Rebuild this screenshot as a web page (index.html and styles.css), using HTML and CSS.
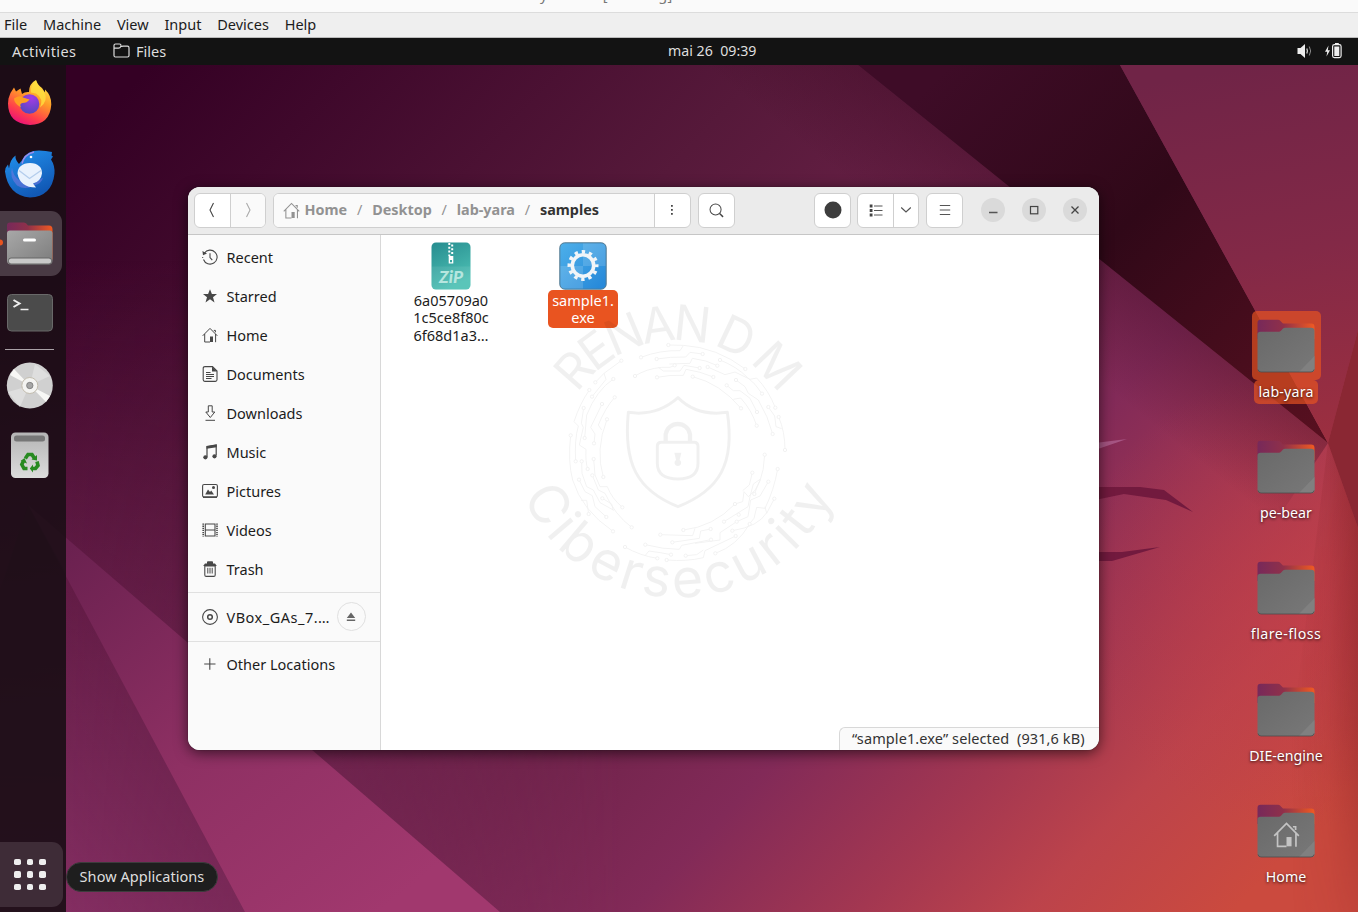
FILE: index.html
```html
<!DOCTYPE html>
<html lang="en">
<head>
<meta charset="utf-8">
<title>Files</title>
<link rel="stylesheet" href="styles.css">
</head>
<body>
<svg width="0" height="0" class="defs">
  <defs>
    <linearGradient id="tab" x1="0" x2="1"><stop offset="0" stop-color="#77295a"/><stop offset=".45" stop-color="#8f304a"/><stop offset="1" stop-color="#f05a22"/></linearGradient>
    <linearGradient id="grey" x1="0" y1="0" x2="1" y2="1"><stop offset="0" stop-color="#696969"/><stop offset="1" stop-color="#787878"/></linearGradient>
    <symbol id="folder" viewBox="0 0 58 54">
      <path d="M.5 50V4Q.5 .8 3.500 .8H21Q22.500 .8 23.500 2L26 4.600H54Q57.500 4.600 57.500 8V20H.5Z" fill="url(#tab)"/>
      <path d="M.5 15.500Q.5 12.700 3.500 12.700H22Q23 12.700 24 11.700L26 9.600Q27 8.700 28 8.700H54Q57.500 8.700 57.500 12V49.500Q57.500 53 54 53H4Q.5 53 .5 49.500Z" fill="url(#grey)"/>
      <path d="M57.500 37V49.500Q57.500 53 54 53H42Z" fill="#808080"/>
      <path d="M1 50.500Q1.500 53 4 53H54Q56.500 53 57 50.500" fill="none" stroke="#4d4d4d" stroke-width=".8"/>
    </symbol>
    <symbol id="home" viewBox="0 0 16 16">
      <path d="M.7 8.800L8 1.400L15.300 8.800M2.700 7V15H8M13.600 7V15.200M11.800 3.400H13.400V5.300" fill="none" stroke="currentColor" stroke-width="1"/><path d="M8 9.500H11V15H8Z" fill="currentColor"/>
    </symbol>
  </defs>
</svg>

<header class="host-title"><span>y</span><span>[Running]</span></header>
<nav class="host-menu"><span>File</span><span>Machine</span><span>View</span><span>Input</span><span>Devices</span><span>Help</span></nav>

<main class="guest">
  <div class="topbar">
    <span class="activities">Activities</span>
    <svg class="tb-folder" width="18" height="16" viewBox="0 0 18 16"><path d="M1 12.500V2.500Q1 1 2.500 1H6.500Q8 1 8 2.500T9.500 3.200H14.500Q16 3.200 16 4.700V12.500Q16 14 14.500 14H2.500Q1 14 1 12.500ZM1 5.200H5.500Q7 5.200 8 3.200" fill="none" stroke="#ddd" stroke-width="1.200"/></svg>
    <span>Files</span>
    <span class="clock">mai 26&nbsp; 09:39</span>
    <svg class="tray" width="50" height="18" viewBox="0 0 50 18"><path d="M1.500 6H4.500L9 2V16L4.500 12H1.500Z" fill="#eee"/><path d="M10.800 6.500Q12 9 10.800 11.500" fill="none" stroke="#ddd" stroke-width="1.200"/><path d="M13.300 4.500Q16 9 13.300 13.500" fill="none" stroke="#888" stroke-width="1"/><path d="M32.500 3.500L29 9.800H31.200L30.500 14.500L34 8.300H31.800Z" fill="#eee"/><rect x="36.600" y="2.600" width="8.500" height="13" rx="1.800" fill="none" stroke="#eee" stroke-width="1.200"/><rect x="38.300" y="4.500" width="5" height="9.500" fill="#eee"/><rect x="39" y="1" width="3.800" height="2" fill="#eee"/></svg>
  </div>

  <div class="desktop">
    <svg class="wallpaper" viewBox="0 65 1358 847" preserveAspectRatio="none">
      <defs>
        <linearGradient id="base" gradientUnits="userSpaceOnUse" x1="150" y1="65" x2="1150" y2="1000"><stop offset="0" stop-color="#340024"/><stop offset=".33" stop-color="#56193a"/><stop offset=".55" stop-color="#6f234a"/><stop offset=".68" stop-color="#822a58"/><stop offset=".8" stop-color="#a33751"/><stop offset=".89" stop-color="#bc434b"/><stop offset="1" stop-color="#cb4a3e"/></linearGradient>
        <linearGradient id="leftlow" gradientUnits="userSpaceOnUse" x1="60" y1="260" x2="60" y2="912"><stop offset="0" stop-color="#711f50" stop-opacity="0"/><stop offset="1" stop-color="#842e62"/></linearGradient>
        <linearGradient id="fade" gradientUnits="userSpaceOnUse" x1="66" y1="0" x2="620" y2="0"><stop offset="0" stop-color="#fff"/><stop offset="1" stop-color="#000"/></linearGradient>
        <mask id="leftmask"><rect x="0" y="65" width="1358" height="847" fill="url(#fade)"/></mask>
        <linearGradient id="dark" gradientUnits="userSpaceOnUse" x1="950" y1="65" x2="1320" y2="440"><stop offset="0" stop-color="#3e0c27"/><stop offset=".45" stop-color="#300818"/><stop offset="1" stop-color="#581020"/></linearGradient>
        <linearGradient id="rt" gradientUnits="userSpaceOnUse" x1="1250" y1="65" x2="1320" y2="440"><stop offset="0" stop-color="#702447"/><stop offset=".5" stop-color="#832947"/><stop offset="1" stop-color="#9c2f40"/></linearGradient>
        <linearGradient id="mag" gradientUnits="userSpaceOnUse" x1="80" y1="540" x2="380" y2="912"><stop offset="0" stop-color="#6b2150"/><stop offset=".5" stop-color="#8e3063"/><stop offset="1" stop-color="#a1386e"/></linearGradient>
        <linearGradient id="shade" gradientUnits="userSpaceOnUse" x1="1292" y1="0" x2="1362" y2="0"><stop offset="0" stop-color="#7c1c20" stop-opacity="0"/><stop offset=".5" stop-color="#7c1c20" stop-opacity=".15"/><stop offset="1" stop-color="#7c1c20" stop-opacity=".6"/></linearGradient>
        <linearGradient id="shadefade" x1="0" y1="0" x2="0" y2="1"><stop offset="0" stop-color="#fff"/><stop offset=".6" stop-color="#aaa"/><stop offset="1" stop-color="#333"/></linearGradient>
        <mask id="shademask"><rect x="1260" y="440" width="100" height="480" fill="url(#shadefade)"/></mask>
        <linearGradient id="ridge" gradientUnits="userSpaceOnUse" x1="1090" y1="252" x2="1030" y2="327"><stop offset="0" stop-color="#3c0a22" stop-opacity=".35"/><stop offset="1" stop-color="#3c0a22" stop-opacity="0"/></linearGradient>
        <radialGradient id="pink" gradientUnits="userSpaceOnUse" cx="1300" cy="600" r="230"><stop offset="0" stop-color="#c23d48" stop-opacity=".6"/><stop offset="1" stop-color="#c23d48" stop-opacity="0"/></radialGradient>
      </defs>
      <rect y="65" width="1358" height="847" fill="url(#base)"/>
      <rect y="65" width="1358" height="847" fill="url(#leftlow)" mask="url(#leftmask)"/>
      <rect y="65" width="1358" height="847" fill="url(#pink)"/>
      <path d="M858 65L1328 443L1260 545L690 100V65Z" fill="url(#ridge)"/>
      <path d="M858 65H1120L1328 443Z" fill="url(#dark)"/>
      <path d="M1120 65H1358V330L1328 443Z" fill="url(#rt)"/>
      <path d="M1358 330L1328 443L1358 528Z" fill="#8a2733"/>
      <path d="M1328 443L1358 528V912H1270Z" fill="url(#shade)" mask="url(#shademask)"/>
      <path d="M28 505L500 912H245Z" fill="url(#mag)"/>
      <path d="M28 505L66 573V912H0V590Z" fill="#3b1c32" opacity=".35"/>
      <path d="M1095 443L1127 439L1095 450Z" fill="#a65583"/>
      <path d="M1095 487H1140L1164 490L1193 512L1166 500L1124 494L1095 500Z" fill="#721a3e"/>
      <path d="M1095 552H1122L1160 547L1112 561H1095Z" fill="#721a3e"/>
    </svg>

    <aside class="dock">
      <div class="tile"><svg width="66" height="65" viewBox="0 71.500 66 65">
        <defs><linearGradient id="fx" x1=".8" y1="0" x2=".3" y2="1"><stop offset="0" stop-color="#fff14a"/><stop offset=".4" stop-color="#ff9b28"/><stop offset=".75" stop-color="#ff3f4b"/><stop offset="1" stop-color="#e9107a"/></linearGradient><radialGradient id="fp" cx=".6" cy=".2" r=".9"><stop offset="0" stop-color="#a43be6"/><stop offset="1" stop-color="#4b49b8"/></radialGradient></defs>
        <path d="M8.500 99Q10 93 14 88L16 92L20.500 89L22 94.500Q25 92 29 92.500Q29 84 36 80.500Q38 86 42 88.500L45 93V90Q51.500 96 51.300 105Q50 125 30 125.500Q8 124 8 104Z" fill="url(#fx)"/>
        <circle cx="29.500" cy="104.500" r="9.800" fill="url(#fp)"/>
        <path d="M14 99Q20 95 23 98L29.500 100Q27 103.500 22.500 103.500Q19 104 21 108Q14 104 14 99Z" fill="#ff9e22"/>
        <path d="M36 94Q44 99 40 108Q49 101 44 92Q38 88 36 81Q30 86 31 93Z" fill="#ffe03e" opacity=".8"/>
      </svg></div>
      <div class="tile"><svg width="66" height="65" viewBox="0 141.500 66 65">
        <defs><linearGradient id="tb" x1="0" y1="0" x2=".5" y2="1"><stop offset="0" stop-color="#2394ef"/><stop offset="1" stop-color="#1158b5"/></linearGradient></defs>
        <path d="M5 172Q5 168 8 165L9 169Q10 160 15.500 156Q15 160 19 164.500Q21 162 22.500 160Q27 151 39 151Q46 151 52 152.500L51.500 156L53 157L51 160Q55 166 54.500 174Q52 197 30 198Q8 196 5 172Z" fill="url(#tb)"/>
        <path d="M22 164Q24 155 34 152.500" fill="none" stroke="#9d8bea" stroke-width="1.500"/>
        <path d="M12 168Q9 178 17 186Q25 191 34 186Q42 184 43 178L34 184Q14 184 12 168Z" fill="#6f78e0" opacity=".6"/>
        <path d="M30 163.500Q42 164 42 174Q41 182 33 184L36 188Q20 188 17.500 174Q18 164 30 163.500Z" fill="#e9f2fd"/>
        <path d="M19 171L29.500 179L41 171" fill="none" stroke="#b4cdec" stroke-width="1.400"/>
        <circle cx="31" cy="157.500" r="1.300" fill="#fff"/>
      </svg></div>
      <div class="tile active"><svg width="66" height="65" viewBox="0 211.500 66 65">
        <defs><linearGradient id="fm" x1="0" y1="0" x2="1" y2="1"><stop offset="0" stop-color="#a8a8a8"/><stop offset="1" stop-color="#7c7c7c"/></linearGradient></defs>
        <circle cx="0" cy="243" r="3" fill="#e95420"/>
        <path d="M7 260V226Q7 223 10 223H24Q26 223 28 226H49Q52.500 226 52.500 230V260Z" fill="url(#tab)"/>
        <path d="M7 234Q7 231 10 231H49.500Q52.500 231 52.500 234V261Q52.500 265 49 265H11Q7 265 7 261Z" fill="url(#fm)"/>
        <rect x="23" y="239" width="13" height="3" rx="1.500" fill="#fff"/>
        <rect x="8.500" y="258.500" width="43" height="6" rx="2.500" fill="#c9c9c9" stroke="#666"/>
      </svg></div>
      <div class="tile"><svg width="66" height="65" viewBox="0 281 66 65">
        <rect x="7.500" y="294.500" width="45" height="36.500" rx="4" fill="#4b4b4b" stroke="#696969"/>
        <path d="M13.500 300L19.500 303.500L13.500 307" fill="none" stroke="#eee" stroke-width="2"/><path d="M20.500 309.500H28.500" stroke="#eee" stroke-width="1.500"/>
      </svg></div>
      <div class="rule"></div>
      <div class="tile"><svg width="66" height="65" viewBox="0 353 66 65">
        <circle cx="29.800" cy="385.500" r="23" fill="#d0d0d0"/><path d="M29.800 385.500L10 375L14 369ZM29.800 385.500L50 396L46 402Z" fill="#f7f7f5"/><path d="M8 392L29 386L20 407ZM50 376L30 385L35 364Z" fill="#dedede"/>
        <circle cx="29.800" cy="385.500" r="8" fill="#f4f4f2" stroke="#c2bcae"/><circle cx="29.800" cy="385.500" r="3.200" fill="#a6a6a6" stroke="#777" stroke-width=".8"/>
      </svg></div>
      <div class="tile"><svg width="66" height="65" viewBox="0 423 66 65">
        <defs><linearGradient id="bin" x1="0" y1="0" x2="0" y2="1"><stop offset="0" stop-color="#b5b5b5"/><stop offset="1" stop-color="#dcdcdc"/></linearGradient></defs>
        <rect x="11" y="432.500" width="37.500" height="45.500" rx="4.500" fill="url(#bin)"/><rect x="14" y="435.500" width="31" height="6" rx="2.500" fill="#777"/>
        <g fill="none" stroke="#278a20" stroke-width="3.600"><path d="M25.300 458.500L28 454.500H32L34.500 458.500"/><path d="M37 461.500L38 465.500L35.500 468.500H32"/><path d="M27.500 468.500H24L21.800 464.500L23.500 461"/></g>
        <path d="M37 455V460.500L31.500 459.500ZM33 464.500V472.500L29.800 468.500ZM20.500 461L24.500 458L27 463.500Z" fill="#278a20"/>
      </svg></div>
      <div class="tile apps"><i></i><i></i><i></i><i></i><i></i><i></i><i></i><i></i><i></i></div>
    </aside>
    <div class="tooltip">Show Applications</div>

    <div class="shortcuts">
      <div class="shortcut chosen"><div class="pic"><svg width="58" height="54"><use href="#folder"/></svg></div><span>lab-yara</span></div>
      <div class="shortcut"><div class="pic"><svg width="58" height="54"><use href="#folder"/></svg></div><span>pe-bear</span></div>
      <div class="shortcut"><div class="pic"><svg width="58" height="54"><use href="#folder"/></svg></div><span class="loose">flare-floss</span></div>
      <div class="shortcut"><div class="pic"><svg width="58" height="54"><use href="#folder"/></svg></div><span>DIE-engine</span></div>
      <div class="shortcut"><div class="pic"><svg width="58" height="54"><use href="#folder"/><g class="emblem"><use href="#home" x="16" y="17" width="27" height="27"/></g></svg></div><span>Home</span></div>
    </div>

    <section class="window">
      <div class="headerbar">
        <div class="group nav"><button><svg width="10" height="18" viewBox="0 0 10 18"><path d="M6.500 2L3 9L6.500 16" fill="none" stroke="#444" stroke-width="1.100"/></svg></button><button class="off"><svg width="10" height="18" viewBox="0 0 10 18"><path d="M3.500 2L7 9L3.500 16" fill="none" stroke="#aaa" stroke-width="1.100"/></svg></button></div>
        <div class="group path">
          <div class="crumbs"><svg width="17" height="17"><use href="#home"/></svg><b class="c1">Home</b><i>/</i><b class="c2">Desktop</b><i>/</i><b class="c3">lab-yara</b><i>/</i><b class="here">samples</b></div>
          <button><svg width="4" height="14" viewBox="0 0 4 14"><path d="M1 2H2.800V3.800H1ZM1 6H2.800V7.800H1ZM1 10H2.800V11.800H1Z" fill="#444"/></svg></button>
        </div>
        <div class="group one search"><button><svg width="15" height="15" viewBox="0 0 16 16"><circle cx="7" cy="7" r="5.900" fill="none" stroke="#4a4a4a" stroke-width="1.100"/><path d="M11.300 11.300L15 14.800" stroke="#444" stroke-width="1.500"/></svg></button></div>
        <div class="group one dot"><button><svg width="18" height="18"><circle cx="9" cy="9" r="8.500" fill="#3d3d3d"/></svg></button></div>
        <div class="group view"><button><svg width="14" height="13" viewBox="0 0 14 13"><path d="M5 2H13.500M5 6.500H13.500M5 11H13.500" stroke="#555" stroke-width="1"/><path d="M.7 .5H3.500V3.500H.7ZM.7 5H3.500V8H.7ZM.7 9.500H3.500V12.500H.7Z" fill="#444"/></svg></button><button><svg width="12" height="8" viewBox="0 0 12 8"><path d="M1.200 1.500L6 6L10.800 1.500" fill="none" stroke="#555" stroke-width="1.200"/></svg></button></div>
        <div class="group one"><button><svg width="12" height="12" viewBox="0 0 12 12"><path d="M.8 1.500H11.200M.8 6H11.200M.8 10.500H11.200" stroke="#555" stroke-width="1.100"/></svg></button></div>
        <div class="controls">
          <button><svg width="12" height="12" viewBox="0 0 12 12"><path d="M2 8.500H10.500" stroke="#555" stroke-width="1.300"/></svg></button>
          <button><svg width="12" height="12" viewBox="0 0 12 12"><rect x="2.500" y="2.500" width="7.300" height="7.300" fill="none" stroke="#444" stroke-width="1.200"/></svg></button>
          <button><svg width="12" height="12" viewBox="0 0 12 12"><path d="M2.500 2.500L9.500 9.500M9.500 2.500L2.500 9.500" stroke="#444" stroke-width="1.300"/></svg></button>
        </div>
      </div>
      <div class="body">
        <nav class="places">
          <a><svg viewBox="0 0 16 16"><path d="M2.300 4.200A7 7 0 1 1 1.500 10.500" fill="none" stroke="currentColor" stroke-width="1.100"/><path d="M.4 2L1 6.300L5 4.600Z" fill="currentColor"/><path d="M8 4.200V8.500L10.300 11.200" fill="none" stroke="currentColor" stroke-width="1.100"/><path d="M.7 8V9" stroke="currentColor"/></svg>Recent</a>
          <a><svg viewBox="0 0 16 16"><path d="M8 1.200L9.900 6H15L11 9.200L12.500 14.500L8 11.300L3.500 14.500L5 9.200L1 6H6.100Z" fill="currentColor"/></svg>Starred</a>
          <a><svg viewBox="0 0 16 16"><use href="#home"/></svg>Home</a>
          <a><svg viewBox="0 0 16 16"><path d="M3 .6H10.500L15 5V13.800Q15 15.400 13.400 15.400H2.800Q1.200 15.400 1.200 13.800V2.200Q1.200 .6 3 .6Z" fill="none" stroke="currentColor" stroke-width="1.100"/><path d="M10 .6V5.500H15Z" fill="currentColor"/><path d="M4 6.500H8.500M4 8.500H12M4 10.500H12M4 12.500H9.500" stroke="currentColor" stroke-width="1"/></svg>Documents</a>
          <a><svg viewBox="0 0 16 16"><path d="M6.300 .8H10.200V7H12.800L8.300 12.500L3.800 7H6.300ZM3.500 15.300H13" fill="none" stroke="currentColor" stroke-width="1"/></svg>Downloads</a>
          <a><svg viewBox="0 0 16 16"><path d="M5 13V2.500L14.200 1V11.500" fill="none" stroke="currentColor" stroke-width="1.200"/><path d="M4.500 2.200L14.700 .6V3.200L4.500 4.800Z" fill="currentColor"/><circle cx="3.400" cy="13.300" r="2.100" fill="currentColor"/><circle cx="12.500" cy="12.300" r="2.100" fill="currentColor"/></svg>Music</a>
          <a><svg viewBox="0 0 16 16"><rect x=".6" y="1.500" width="14.800" height="12.500" rx="1.500" fill="none" stroke="currentColor" stroke-width="1.100"/><path d="M1 14.200H15" stroke="currentColor" stroke-width="1.500"/><path d="M3.200 11.500L6 6.500L8 9L9.200 7.500L12 11.500Z" fill="currentColor"/><circle cx="11.500" cy="4.500" r="1.500" fill="currentColor"/></svg>Pictures</a>
          <a><svg viewBox="0 0 16 16"><path d="M1.200 1.500V14.500M15 1.500V14.500" stroke="currentColor" stroke-width="1.600" stroke-dasharray="1.300 .8"/><path d="M3.300 1.500V14.500M13 1.500V14.500M3.500 2H13M3.500 8H13M3.500 14H13" stroke="currentColor" stroke-width="1.100"/></svg>Videos</a>
          <a><svg viewBox="0 0 16 16"><path d="M2.800 5H13.200V14Q13.200 15.400 11.800 15.400H4.200Q2.800 15.400 2.800 14Z" fill="none" stroke="currentColor" stroke-width="1.100"/><path d="M1.200 5L3 2.500H5V1Q5 .2 6 .2H10Q11 .2 11 1V2.500H13L14.800 5Z" fill="currentColor"/><path d="M5.800 6.800V12.500M8 6.800V12.500M10.200 6.800V12.500" stroke="currentColor" stroke-width="1"/></svg>Trash</a>
          <hr>
          <a class="mount"><svg viewBox="0 0 16 16"><circle cx="8" cy="8" r="7.400" fill="none" stroke="currentColor" stroke-width="1.100"/><circle cx="8" cy="8" r="2.300" fill="none" stroke="currentColor" stroke-width="1.500"/></svg><span class="volume">VBox_GAs_7.…</span><span class="eject"><svg viewBox="0 0 10 10"><path d="M5 .5L9.200 6H.8ZM.8 7.500H9.200V9H.8Z" fill="#666"/></svg></span></a>
          <hr>
          <a class="other"><svg viewBox="0 0 16 16"><path d="M2.200 8H13.500M7.800 2.300V13.700" stroke="currentColor" stroke-width="1.100"/></svg>Other Locations</a>
        </nav>
        <div class="files">
          <div class="file">
            <svg width="48" height="48" viewBox="0 0 48 48"><defs><linearGradient id="zp" x1="0" y1="0" x2=".4" y2="1"><stop offset="0" stop-color="#268c8f"/><stop offset="1" stop-color="#4dc0b4"/></linearGradient></defs><rect x="4.500" y=".5" width="39" height="47" rx="4.500" fill="url(#zp)"/><path d="M4.500 24.500H43.500V43Q43.500 47.500 39 47.500H9Q4.500 47.500 4.500 43Z" fill="#fff" opacity=".08"/><path d="M22.300 1V14M25.200 2.500V14" stroke="#fff" stroke-width="2" stroke-dasharray="2 1.800"/><path d="M21.700 14H26.300V21.500H21.700ZM23 18V20.300H25V18Z" fill="#fff" fill-rule="evenodd"/><text x="12" y="40.500" class="ziptext" textLength="24" lengthAdjust="spacingAndGlyphs">ZiP</text></svg>
            <span>6a05709a0<br>1c5ce8f80c<br>6f68d1a3…</span>
          </div>
          <div class="file picked">
            <svg width="48" height="48" viewBox="0 0 48 48"><defs><linearGradient id="ex" x1="0" y1="0" x2="1" y2="1"><stop offset="0" stop-color="#4db0ea"/><stop offset="1" stop-color="#2486d8"/></linearGradient></defs><rect x=".8" y=".8" width="46.400" height="46.400" rx="5" fill="url(#ex)" stroke="#55798f"/><path d="M24 1.500H42Q46.500 1.500 46.500 6V24H24ZM1.500 24H24V46.500H6Q1.500 46.500 1.500 42Z" fill="#fff" opacity=".14"/><circle cx="24" cy="23.500" r="10.700" fill="none" stroke="#f1f5f8" stroke-width="3.600"/><circle cx="24" cy="23.500" r="13.700" fill="none" stroke="#f1f5f8" stroke-width="3.600" stroke-dasharray="3.400 3.773" stroke-dashoffset="1.700"/></svg>
            <span>sample1.<br>exe</span>
          </div>
        </div>
        <div class="status">“sample1.exe” selected&nbsp; (931,6 kB)</div>
      </div>
    </section>

    <svg class="watermark" viewBox="0 0 990 960">
      <defs><path id="arcTop" d="M173 311A362 362 0 0 1 813 389"/><path id="arcBottom" d="M9 618A506 506 0 0 0 962 547"/></defs>
      <g class="mark-text"><text font-size="147" textLength="712" lengthAdjust="spacing"><textPath href="#arcTop" textLength="712">RENAN D M</textPath></text>
      <text font-size="162" textLength="1180" lengthAdjust="spacing"><textPath href="#arcBottom" textLength="1180">Cibersecurity</textPath></text></g>
      <g fill="none" stroke="#000" stroke-width="9" stroke-linejoin="round">
        <path d="M474 323Q410 380 325 367C310 520 350 600 474 650C600 600 645 520 622 367Q530 380 474 323Z"/>
        <path d="M424 457H522Q534 457 534 469V520Q534 567 474 567Q412 567 412 520V469Q412 457 424 457Z"/>
        <path d="M437 455V433A37 37 0 0 1 510 433V455" stroke-width="13"/>
      </g>
      <path d="M463 488H484L479 510A10 10 0 1 1 468 510Z"/>
      <g fill="none" stroke="#000" stroke-width="2.600">
        <path d="M445 165L490 166Q590 172 676 237M363 202Q420 180 480 182L490 167M410 207Q450 200 497 201L510 187L548 192M345 258Q380 236 425 232H450L464 226M415 232L430 243H480L492 226L539 234M411 262Q450 254 490 256L498 238Q540 244 580 261M448 222L510 220L517 205Q560 210 592 227M563 231L615 254L645 246L690 268L710 264Q745 300 766 353M600 210Q650 230 682 262L705 283L726 311M648 270L675 290L685 310L715 330Q745 380 758 432M518 260Q600 280 663 355M620 286L640 302L660 302L690 325L711 366M640 328L662 324Q695 360 710 407M745 351L764 378L768 410L785 416M776 381Q795 425 795 480"/>
        <path d="M304 212L252 250L226 277M252 250L258 268L216 320M280 267Q230 300 200 375L194 444M208 300Q180 340 162 395L175 408Q163 450 167 514M191 354L184 400L190 412L178 465L198 478Q196 515 203 537M246 342L212 412L225 432L222 460M284 322Q255 355 235 405L245 420M261 388Q225 480 250 561M152 436Q143 515 158 570Q185 660 279 724M185 514L186 550L200 590L220 600L240 638L280 660M221 507L225 555L240 590L262 590Q275 625 307 652M217 556L235 600L255 610Q285 675 335 712M177 569L195 605L217 617L225 650L259 681M183 631H200L206 672M247 625L275 642L280 662"/>
        <path d="M734 494Q730 590 685 620L672 605L668 635L645 642M697 548L688 585L668 602M720 568L700 582L690 620L684 650L612 695M703 612L720 570M645 642Q580 710 490 720M421 734L518 737L525 715M773 537Q762 600 735 655L710 652L702 685L688 702M745 575L720 618L692 630L684 680L650 695M763 626L740 670L735 650M740 668Q715 710 637 722M572 717L542 723L538 745L457 757M650 695L600 728V750L525 760M376 764Q430 778 478 778L485 766L573 749M315 771Q360 797 412 805M375 797L387 783Q425 788 453 794M440 810Q500 815 550 803L555 782L647 738M497 797L530 794L550 780M586 790Q650 768 689 702"/>
      </g>
      <g fill="#fff" stroke="#000" stroke-width="2.600" class="nodes">
        <circle cx="445" cy="165" r="5"/><circle cx="363" cy="202" r="5"/><circle cx="410" cy="207" r="5"/><circle cx="548" cy="192" r="5"/><circle cx="345" cy="258" r="5"/><circle cx="464" cy="226" r="5"/><circle cx="411" cy="262" r="5"/><circle cx="539" cy="234" r="5"/><circle cx="580" cy="261" r="5"/><circle cx="518" cy="260" r="5"/><circle cx="592" cy="227" r="5"/><circle cx="563" cy="231" r="5"/><circle cx="600" cy="210" r="5"/><circle cx="676" cy="237" r="5"/><circle cx="648" cy="270" r="5"/><circle cx="620" cy="286" r="5"/><circle cx="726" cy="311" r="5"/><circle cx="766" cy="353" r="5"/><circle cx="745" cy="351" r="5"/><circle cx="663" cy="355" r="5"/><circle cx="711" cy="366" r="5"/><circle cx="776" cy="381" r="5"/><circle cx="710" cy="407" r="5"/><circle cx="758" cy="432" r="5"/><circle cx="795" cy="480" r="5"/>
        <circle cx="304" cy="212" r="5"/><circle cx="226" cy="277" r="5"/><circle cx="280" cy="267" r="5"/><circle cx="208" cy="300" r="5"/><circle cx="216" cy="320" r="5"/><circle cx="284" cy="322" r="5"/><circle cx="246" cy="342" r="5"/><circle cx="191" cy="354" r="5"/><circle cx="261" cy="388" r="5"/><circle cx="152" cy="436" r="5"/><circle cx="194" cy="444" r="5"/><circle cx="222" cy="460" r="5"/><circle cx="167" cy="514" r="5"/><circle cx="185" cy="514" r="5"/><circle cx="221" cy="507" r="5"/><circle cx="203" cy="537" r="5"/><circle cx="217" cy="556" r="5"/><circle cx="250" cy="561" r="5"/><circle cx="177" cy="569" r="5"/><circle cx="247" cy="625" r="5"/><circle cx="307" cy="652" r="5"/><circle cx="206" cy="672" r="5"/><circle cx="259" cy="681" r="5"/><circle cx="335" cy="712" r="5"/><circle cx="279" cy="724" r="5"/>
        <circle cx="734" cy="494" r="5"/><circle cx="773" cy="537" r="5"/><circle cx="697" cy="548" r="5"/><circle cx="745" cy="575" r="5"/><circle cx="703" cy="612" r="5"/><circle cx="763" cy="626" r="5"/><circle cx="645" cy="642" r="5"/><circle cx="656" cy="674" r="5"/><circle cx="612" cy="695" r="5"/><circle cx="650" cy="695" r="5"/><circle cx="689" cy="702" r="5"/><circle cx="490" cy="720" r="5"/><circle cx="572" cy="717" r="5"/><circle cx="637" cy="722" r="5"/><circle cx="421" cy="734" r="5"/><circle cx="647" cy="738" r="5"/><circle cx="573" cy="749" r="5"/><circle cx="457" cy="757" r="5"/><circle cx="376" cy="764" r="5"/><circle cx="315" cy="771" r="5"/><circle cx="586" cy="790" r="5"/><circle cx="453" cy="794" r="5"/><circle cx="497" cy="797" r="5"/><circle cx="412" cy="805" r="5"/><circle cx="440" cy="810" r="5"/>
      </g>
    </svg>
  </div>
</main>
</body>
</html>
```
FILE: styles.css
```css
* { box-sizing: border-box; }
body { margin: 0; width: 1358px; height: 912px; overflow: hidden; display: flex; flex-direction: column; font: 14.5px/20px "Noto Sans", "Open Sans", sans-serif; color: #1c1c1c; background: #fafafa; }
svg { display: block; flex: none; }
button { appearance: none; border: 0; padding: 0; margin: 0; background: none; font: inherit; display: flex; align-items: center; justify-content: center; }
.defs { position: absolute; }
.host-title { height: 13px; flex: none; overflow: hidden; display: flex; gap: 55px; padding-left: 540px; line-height: 20px; color: #777; border-bottom: 1px solid #dcdcdc; letter-spacing: .3px; }
.host-title span { margin-top: -16px; }
.host-menu { height: 25px; flex: none; display: flex; gap: 15.8px; padding-left: 4px; line-height: 22px; background: #efefef; border-bottom: 1px solid #bbb; }
.guest { flex: 1; display: flex; flex-direction: column; min-height: 0; }
.topbar { position: relative; height: 27px; flex: none; display: flex; align-items: center; background: #131313; color: #dedede; padding: 0 0 2px 12px; }
.activities { width: 101px; letter-spacing: .4px; }
.tb-folder { margin-right: 5px; }
.clock { position: absolute; left: 668px; top: 3px; font-size: 14.2px; white-space: nowrap; }
.tray { margin-left: auto; margin-right: 12px; }
.desktop { position: relative; flex: 1; overflow: hidden; }
.wallpaper { position: absolute; inset: 0; width: 1358px; height: 847px; }
.dock { position: absolute; left: 0; top: 0; bottom: 0; width: 66px; display: flex; flex-direction: column; gap: 5px; padding: 6px 0 5px; background: rgba(25, 14, 21, .87); }
.tile { height: 65px; width: 66px; flex: none; }
.tile.active { background: #493a44; width: 62px; border-radius: 0 11px 11px 0; }
.rule { height: 1px; width: 49px; margin: -2px 0 -2.5px 5px; background: #aaa2a7; flex: none; }
.apps { width: 63px; margin-top: auto; border-radius: 0 11px 11px 0; background: #3e2c37; display: grid; grid-template-columns: repeat(3, 6.5px); gap: 6px; align-content: center; padding-left: 14px; }
.apps i { height: 6.5px; background: #eee; border-radius: 1.8px; }
.tooltip { position: absolute; left: 66px; top: 797px; width: 152px; height: 30px; border: 1px solid #3c3c3c; border-radius: 15px; background: #1e1e1e; color: #dedede; text-align: center; line-height: 27px; white-space: nowrap; letter-spacing: .05px; }
.shortcuts { position: absolute; right: 22px; top: 246px; width: 100px; display: flex; flex-direction: column; }
.shortcut { height: 121.2px; display: flex; flex-direction: column; align-items: center; color: #fff; font-size: 14.2px; text-shadow: 0 1px 3px rgba(0, 0, 0, .8); }
.shortcut .pic { width: 69px; height: 69px; padding: 8px 0 0 5px; border-radius: 5px; }
.shortcut span { height: 24px; line-height: 24px; padding: 0 4px; border-radius: 5px; white-space: nowrap; }
.chosen span { letter-spacing: .2px; }
.shortcut .loose { letter-spacing: .45px; }
.chosen .pic, .chosen span { background: rgba(233, 84, 32, .68); }
.emblem { color: #c4c4c4; }
.window { position: absolute; left: 188px; top: 122px; width: 911px; height: 563px; border-radius: 12px; overflow: hidden; display: flex; flex-direction: column; background: #fff; box-shadow: 0 3px 14px rgba(0, 0, 0, .6), 0 0 1px #222; }
.headerbar { height: 48px; flex: none; display: flex; padding: 6px 12px 0 5.5px; background: #ebebeb; border-bottom: 1px solid #c6c6c6; }
.group { height: 35px; display: flex; border: 1px solid #cfcfcf; border-radius: 6px; background: #fff; margin-right: 7px; overflow: hidden; }
.group button { padding-bottom: 1px; }
.group button + button, .crumbs + button { border-left: 1px solid #cfcfcf; }
.nav { width: 72px; }
.nav button { width: 35px; }
.off { background: #fafafa; }
.path { width: 418px; }
.path button { width: 36px; margin-left: auto; }
.crumbs { display: flex; align-items: center; width: 382px; padding: 0 0 1px 9px; background: #fafafa; color: #929292; white-space: nowrap; font-size: 14.4px; }
.crumbs b { font-weight: 700; }
.crumbs svg { margin-right: 5px; }
.crumbs i { width: 25px; text-align: center; font-style: normal; }
.here { color: #333; }
.one { width: 37px; }
.one button { width: 35px; }
.dot { margin-left: auto; margin-right: 6px; }
.view { width: 62px; }
.view button { width: 35px; }
.view button + button { width: 25px; }
.controls { display: flex; gap: 17px; margin: 5px 0 0 11px; }
.controls button { width: 24px; height: 24px; border-radius: 50%; background: #dadada; }
.body { position: relative; flex: 1; display: flex; min-height: 0; }
.places { width: 193px; flex: none; padding-top: 3px; background: #fafafa; border-right: 1px solid #d8d8d8; display: flex; flex-direction: column; }
.places a { height: 38.9px; flex: none; display: flex; align-items: center; gap: 8.5px; padding-left: 14px; white-space: nowrap; }
.places a > svg { width: 16px; height: 16px; color: #474747; }
.places hr { width: 100%; height: 1px; border: 0; background: #e0e0e0; margin: 4px 0 0; flex: none; }
.places .mount { height: 45px; margin-top: 1px; margin-bottom: -2px; }
.volume { letter-spacing: .5px; }
.eject { width: 29px; height: 29px; border: 1px solid #e0e0e0; border-radius: 50%; display: flex; align-items: center; justify-content: center; margin-left: -2px; }
.eject svg { width: 10px; height: 10px; }
.places .other { margin-top: 3px; }
.files { display: flex; padding: 7px 0 0 24px; gap: 40px; align-items: flex-start; }
.file { width: 92px; display: flex; flex-direction: column; align-items: center; text-align: center; }
.file span { line-height: 17.5px; padding: 1.5px 4px 1.5px; border-radius: 5px; white-space: nowrap; }
.picked span { background: #e95420; color: #fff; }
.ziptext { font: italic 900 16px Lato, sans-serif; fill: #b6e6df; }
.status { position: absolute; right: 0; bottom: 0; width: 260px; height: 23px; padding-left: 12px; line-height: 21px; font-size: 14.5px; letter-spacing: .1px; white-space: nowrap; color: #333; background: #fafafa; border: 1px solid #d8d8d8; border-width: 1px 0 0 1px; border-radius: 6px 0 0 0; }
.watermark { position: absolute; left: 520px; top: 225px; width: 330px; height: 320px; opacity: .055; }
.mark-text { font-family: Inter, Roboto, sans-serif; }
```
